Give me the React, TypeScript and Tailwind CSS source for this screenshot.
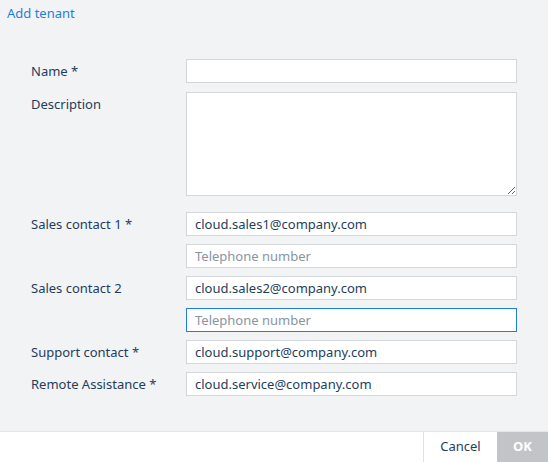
import React from "react";

const font = { fontFamily: '"Segoe UI", "Noto Sans", "Open Sans", sans-serif' };

function Row({ label, children, className = "" }: { label: string; children: React.ReactNode; className?: string }) {
  return (
    <div className={`flex ${className}`}>
      <div className="w-[155px] shrink-0 pt-[3px] text-[13px] leading-[18px] text-[#1f3d5c]">{label}</div>
      <div className="w-[331px]">{children}</div>
    </div>
  );
}

function Input({ value, placeholder, focused }: { value?: string; placeholder?: string; focused?: boolean }) {
  return (
    <input
      defaultValue={value}
      placeholder={placeholder}
      className={`block h-[24px] w-full border bg-white px-[8px] text-[13px] text-[#1f3d5c] outline-none placeholder:text-[#8894a1] ${
        focused ? "border-[#1f80d8]" : "border-[#d5d8db]"
      }`}
      style={font}
    />
  );
}

export default function App() {
  return (
    <div className="flex h-[462px] w-[548px] flex-col bg-[#f2f3f5]" style={font}>
      <div className="px-[7px] pt-[4px] text-[13px] leading-[18px] text-[#1f7fd6]">Add tenant</div>
      <div className="flex flex-1 flex-col gap-2 pl-[31px] pt-[37px]">
        <Row label="Name *">
          <Input />
        </Row>
        <Row label="Description" className="mt-[1px] mb-2">
          <textarea className="block h-[104px] w-full border border-[#d5d8db] bg-white outline-none" />
        </Row>
        <Row label="Sales contact 1 *">
          <Input value="cloud.sales1@company.com" />
        </Row>
        <Row label="">
          <Input placeholder="Telephone number" />
        </Row>
        <Row label="Sales contact 2">
          <Input value="cloud.sales2@company.com" />
        </Row>
        <Row label="">
          <Input placeholder="Telephone number" focused />
        </Row>
        <Row label="Support contact *">
          <Input value="cloud.support@company.com" />
        </Row>
        <Row label="Remote Assistance *">
          <Input value="cloud.service@company.com" />
        </Row>
      </div>
      <div className="flex h-[31px] justify-end border-t border-[#e3e5e8] bg-white">
        <button className="w-[74px] border-l border-[#e0e2e5] text-[13px] text-[#1f3d5c]">Cancel</button>
        <button className="w-[51px] bg-[#c1c5c8] text-[13px] font-bold text-white">OK</button>
      </div>
    </div>
  );
}
